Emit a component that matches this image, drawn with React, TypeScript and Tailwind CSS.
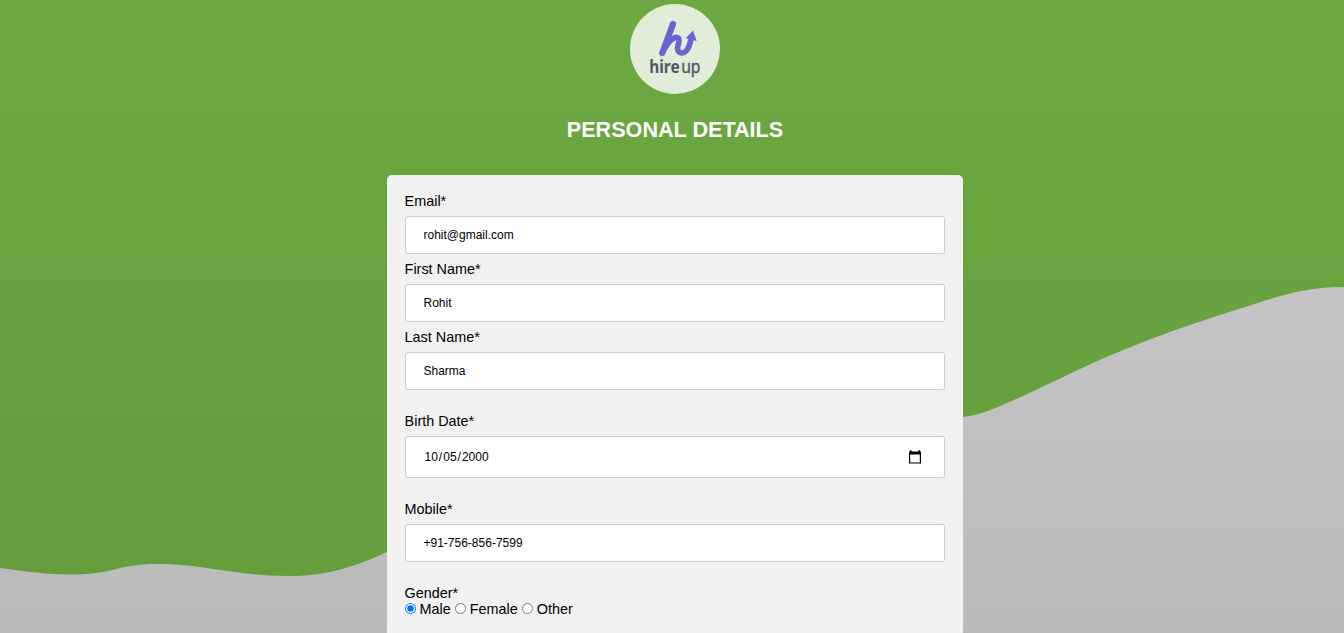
import { useState } from "react";

function Backdrop() {
  return (
    <svg
      className="absolute inset-0 h-full w-full"
      viewBox="0 0 1344 633"
      preserveAspectRatio="none"
      aria-hidden="true"
    >
      <defs>
        <linearGradient id="leaf" x1="0" y1="0" x2="0" y2="633" gradientUnits="userSpaceOnUse">
          <stop offset="0" stopColor="#6ca942" />
          <stop offset="1" stopColor="#649c3b" />
        </linearGradient>
        <linearGradient id="stone" x1="0" y1="0" x2="0" y2="633" gradientUnits="userSpaceOnUse">
          <stop offset="0" stopColor="#cdcdcd" />
          <stop offset="1" stopColor="#bababa" />
        </linearGradient>
      </defs>
      <rect width="1344" height="633" fill="url(#leaf)" />
      <path
        fill="url(#stone)"
        d="M0 568C25 571.500 45 574.500 71 574.500C116 574.500 116 564 157 564C205 564 235 576 288 576C325 576 352 568 387 552C560 470 720 440 963 417C980 415 996 408 1012 401C1052 383 1090 363 1127 348.500C1174 329 1218 316 1265 300.500C1293 292 1314 287 1344 287V633H0Z"
      />
    </svg>
  );
}

function Logo() {
  return (
    <svg className="block h-[90px] w-[90px]" viewBox="0 0 90 90" role="img" aria-label="hireup">
      <circle cx="45" cy="45" r="45" fill="#e2edd9" />
      <g fill="none" stroke="#6764d3" strokeLinecap="round" strokeLinejoin="round">
        <path strokeWidth="6.300" d="M43 20L32.300 49" />
        <path
          strokeWidth="5.600"
          d="M35 44C38.500 37 44 32.500 47.500 33.500C51.500 35 47.500 40 47.600 44.500C47.800 49.500 53 50.500 56.500 46.500C59.500 43 60.300 39 61 34.500"
        />
      </g>
      <path fill="#6764d3" d="M63 26.600L66.700 37L55.700 34.200Z" />
      <g fontFamily="'Noto Sans', sans-serif" fontSize="17.500" fill="#505a66">
        <text x="19.200" y="69.300" textLength="30.500" lengthAdjust="spacingAndGlyphs" fontWeight="700">
          hire
        </text>
        <text
          x="51.200"
          y="69.300"
          textLength="19.300"
          lengthAdjust="spacingAndGlyphs"
          stroke="#505a66"
          strokeWidth="0.400"
        >
          up
        </text>
      </g>
    </svg>
  );
}

function CalendarIcon() {
  return (
    <svg
      className="pointer-events-none absolute top-1/2 right-[22px] h-4 w-4 -translate-y-1/2"
      viewBox="0 0 16 16"
      aria-hidden="true"
    >
      <path
        d="M3 1.300H4.500V2.500H11.500V1.300H13V2.500H14V14.500H2V2.500H3ZM3.200 5.500V13.400H12.800V5.500Z"
        fillRule="evenodd"
      />
    </svg>
  );
}

type FieldProps = {
  label: string;
  value: string;
  type?: "text" | "date";
};

function Field({ label, value, type = "text" }: FieldProps) {
  const [current, setCurrent] = useState(value);
  const isDate = type === "date";
  return (
    <label className="flex flex-col gap-[7px]">
      <span className="-ml-[0.4px] leading-4">{label}</span>
      <span className="relative block">
        <input
          type={type}
          value={current}
          onChange={(e) => setCurrent(e.target.value)}
          className={`block w-full rounded-[3px] border border-[#cccccc] bg-white px-[17.5px] text-[12px] text-black outline-none [&::-webkit-calendar-picker-indicator]:opacity-0 ${
            isDate ? "h-[42px]" : "h-[38px]"
          }`}
        />
        {isDate && <CalendarIcon />}
      </span>
    </label>
  );
}

const genders = ["Male", "Female", "Other"];

export default function App() {
  const [gender, setGender] = useState("Male");
  return (
    <div className="relative h-[633px] w-full overflow-hidden font-['Liberation_Sans',Arial,sans-serif] text-[14.4px] text-black">
      <Backdrop />
      <main className="relative flex flex-col items-center pt-1 pl-[6px]">
        <Logo />
        <h1 className="mt-[20px] text-[21.6px] leading-8 font-bold text-white">PERSONAL DETAILS</h1>
        <form className="mt-[29px] flex h-[600px] w-[576px] flex-col rounded-[5px] bg-[#f1f1f1] p-[18px]">
          <div className="flex flex-col gap-[7px]">
            <Field label="Email*" value="rohit@gmail.com" />
            <Field label="First Name*" value="Rohit" />
            <Field label="Last Name*" value="Sharma" />
          </div>
          <div className="mt-[23px] flex flex-col gap-[23px]">
            <Field label="Birth Date*" value="2000-10-05" type="date" />
            <Field label="Mobile*" value="+91-756-856-7599" />
            <fieldset className="leading-4">
              <legend className="-ml-[0.4px]">Gender*</legend>
              <div className="flex gap-[4.4px]">
                {genders.map((name) => (
                  <label key={name} className="flex items-start gap-[3.6px]">
                    <input
                      type="radio"
                      name="gender"
                      className="mt-[2px] h-[11px] w-[11px]"
                      checked={gender === name}
                      onChange={() => setGender(name)}
                    />
                    {name}
                  </label>
                ))}
              </div>
            </fieldset>
          </div>
        </form>
      </main>
    </div>
  );
}
